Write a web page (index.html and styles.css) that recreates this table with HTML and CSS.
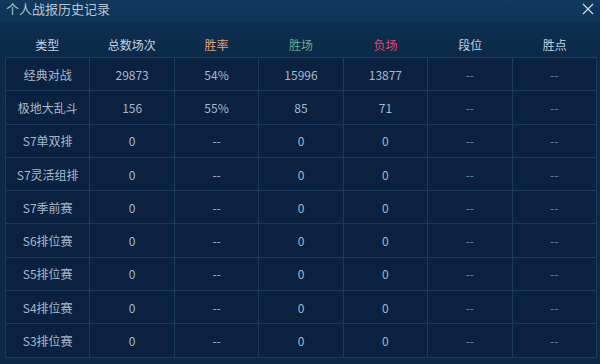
FILE: index.html
```
<!DOCTYPE html>
<html>
<head>
<meta charset="utf-8">
<link rel="stylesheet" href="styles.css">
</head>
<body>
<div class="win">
  <div class="titlebar">
    <span class="title">个人战报历史记录</span>
    <svg class="close" width="12" height="12" viewBox="0 0 12 12"><path d="M1 1L11 11M11 1L1 11" stroke="#c9d6e3" stroke-width="1.3" fill="none"/></svg>
  </div>
  <div class="panel">
    <div class="head">
      <div>类型</div><div>总数场次</div><div class="orange">胜率</div><div class="green">胜场</div><div class="red">负场</div><div>段位</div><div>胜点</div>
    </div>
    <table class="grid">
      <tr><td>经典对战</td><td>29873</td><td>54%</td><td>15996</td><td>13877</td><td>--</td><td>--</td></tr>
      <tr><td>极地大乱斗</td><td>156</td><td>55%</td><td>85</td><td>71</td><td>--</td><td>--</td></tr>
      <tr><td>S7单双排</td><td>0</td><td>--</td><td>0</td><td>0</td><td>--</td><td>--</td></tr>
      <tr><td>S7灵活组排</td><td>0</td><td>--</td><td>0</td><td>0</td><td>--</td><td>--</td></tr>
      <tr><td>S7季前赛</td><td>0</td><td>--</td><td>0</td><td>0</td><td>--</td><td>--</td></tr>
      <tr><td>S6排位赛</td><td>0</td><td>--</td><td>0</td><td>0</td><td>--</td><td>--</td></tr>
      <tr><td>S5排位赛</td><td>0</td><td>--</td><td>0</td><td>0</td><td>--</td><td>--</td></tr>
      <tr><td>S4排位赛</td><td>0</td><td>--</td><td>0</td><td>0</td><td>--</td><td>--</td></tr>
      <tr><td>S3排位赛</td><td>0</td><td>--</td><td>0</td><td>0</td><td>--</td><td>--</td></tr>
    </table>
  </div>
</div>
</body>
</html>
```
FILE: styles.css
```
html, body {
  margin: 0;
  padding: 0;
  background: #0b2846;
}
body {
  width: 600px;
  height: 364px;
  overflow: hidden;
  font-family: "Noto Sans CJK SC", "Noto Sans", sans-serif;
}
.win {
  display: flex;
  flex-direction: column;
  height: 364px;
}
.titlebar {
  height: 22px;
  background: linear-gradient(#10395c, #0e3355);
  display: flex;
  align-items: center;
  justify-content: space-between;
  padding: 0 6px 0 6px;
  flex: none;
}
.title {
  color: #b4c6d8;
  font-size: 13px;
  line-height: 16px;
  margin-top: -4px;
}
.close {
  margin-top: -4px;
}
.panel {
  flex: 1;
  background: linear-gradient(#0d2f50, #0b2948 40px, #0b2846);
  padding: 0 3px 0 5px;
  display: flex;
  flex-direction: column;
}
.head {
  height: 35px;
  box-sizing: border-box;
  display: grid;
  grid-template-columns: repeat(7, 1fr);
  align-items: center;
  color: #c3d1e0;
  font-size: 12px;
  text-align: center;
  padding-top: 9px;
}
.orange { color: #e2a074; }
.green { color: #6aa98a; }
.red { color: #e04866; }
.grid {
  width: 592px;
  border-collapse: collapse;
  table-layout: fixed;
  background: #0a2240;
  border: 1px solid #16375a;
}
.grid td {
  height: 32.3px;
  padding: 0;
  border: 1px solid #1b3b5d;
  text-align: center;
  color: #a7b8ca;
  font-size: 12px;
  font-family: "Noto Sans CJK SC", "Noto Sans", sans-serif;
}
.grid td:nth-child(n+6) {
  color: #6e8298;
}
```
